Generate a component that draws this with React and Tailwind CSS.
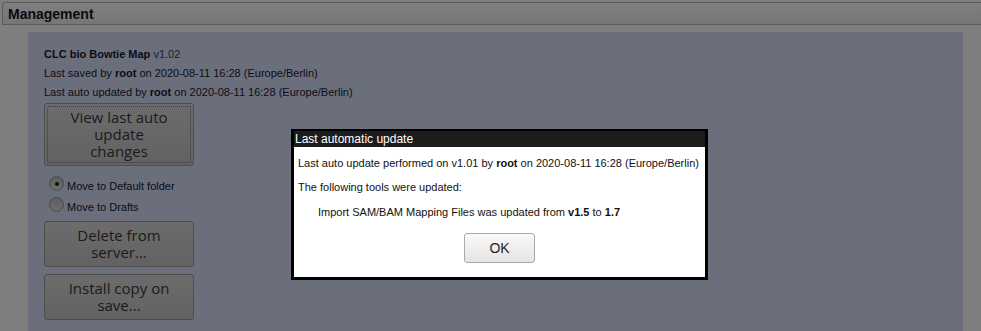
const PanelButton = ({ children, focused }) => (
  <button className="block w-[150px] rounded-[3px] border border-[#4e4e4e] bg-gradient-to-b from-[#6c6c6c] to-[#626262] p-[2px] text-[15px] leading-[17px] text-[#1a1a1a] [font-family:'Open_Sans',sans-serif]">
    <span className={`block rounded-[2px] px-2 py-[2px] ${focused ? "border border-dotted border-[#3a3a3a]" : "border border-transparent"}`}>
      {children}
    </span>
  </button>
);

const Radio = ({ checked, label }) => (
  <label className="flex items-end gap-[3px] h-[21px]">
    <span className="relative ml-[5px] mb-[2px] h-[15px] w-[15px] rounded-full border border-[#4a4a4a] bg-gradient-to-b from-[#5e5e5e] to-[#6e6e6e]">
      {checked && <span className="absolute left-[5px] top-[5px] h-[4px] w-[4px] rounded-full bg-[#111]" />}
    </span>
    <span className="text-[11px] leading-[14px] text-[#0c0c14]">{label}</span>
  </label>
);

export default function App() {
  return (
    <div className="relative h-[331px] w-[981px] overflow-hidden bg-[#7f7f7f] [font-family:'Liberation_Sans',Arial,sans-serif]">
      <div className="ml-[2px] mt-[2px] h-[23px] rounded-tl-[4px] border-l border-t border-b border-[#5b5b5b] bg-gradient-to-b from-[#7f7f7f] to-[#767676] pl-[5px] pt-[3px] text-[14px] font-bold leading-[17px] text-[#0a0a14]">
        Management
      </div>

      <div className="ml-[28px] mt-[7px] h-[320px] w-[935px] bg-[#6b6f7c] pl-[16px] pt-[13px] text-[11px] leading-[19px] text-[#0c0c16]">
        <div>
          <b>CLC bio Bowtie Map</b> <span className="text-[#1c2033]">v1.02</span>
        </div>
        <div>
          Last saved by <b>root</b> on 2020-08-11 16:28 (Europe/Berlin)
        </div>
        <div>
          Last auto updated by <b>root</b> on 2020-08-11 16:28 (Europe/Berlin)
        </div>

        <div className="mt-[1px]">
          <PanelButton focused>
            View last auto
            <br />
            update
            <br />
            changes
          </PanelButton>
        </div>

        <div className="mt-[6px]">
          <Radio checked label="Move to Default folder" />
          <Radio label="Move to Drafts" />
        </div>

        <div className="mt-[7px] flex flex-col gap-[7px]">
          <PanelButton>
            Delete from
            <br />
            server...
          </PanelButton>
          <PanelButton>
            Install copy on
            <br />
            save...
          </PanelButton>
        </div>
      </div>

      <div className="absolute left-[291px] top-[129px] h-[151px] w-[417px] border-[3px] border-t-2 border-black bg-white">
        <div className="h-[16px] bg-[#1c1c1c] pl-[1px] text-[12px] leading-[16px] text-white">
          Last automatic update
        </div>
        <div className="px-[4px] pt-[9px] text-[11px] leading-[14px] text-[#111]">
          <p>
            Last auto update performed on v1.01 by <b>root</b> on 2020-08-11 16:28 (Europe/Berlin)
          </p>
          <p className="mt-[10px]">The following tools were updated:</p>
          <p className="mt-[11px] pl-[20px]">
            Import SAM/BAM Mapping Files was updated from <b>v1.5</b> to <b>1.7</b>
          </p>
          <div className="mt-[14px] flex justify-center">
            <button className="h-[30px] w-[71px] rounded-[3px] border border-[#aaa] bg-gradient-to-b from-[#fafafa] to-[#e4e4e4] text-[14px] text-[#222]">
              OK
            </button>
          </div>
        </div>
      </div>
    </div>
  );
}
